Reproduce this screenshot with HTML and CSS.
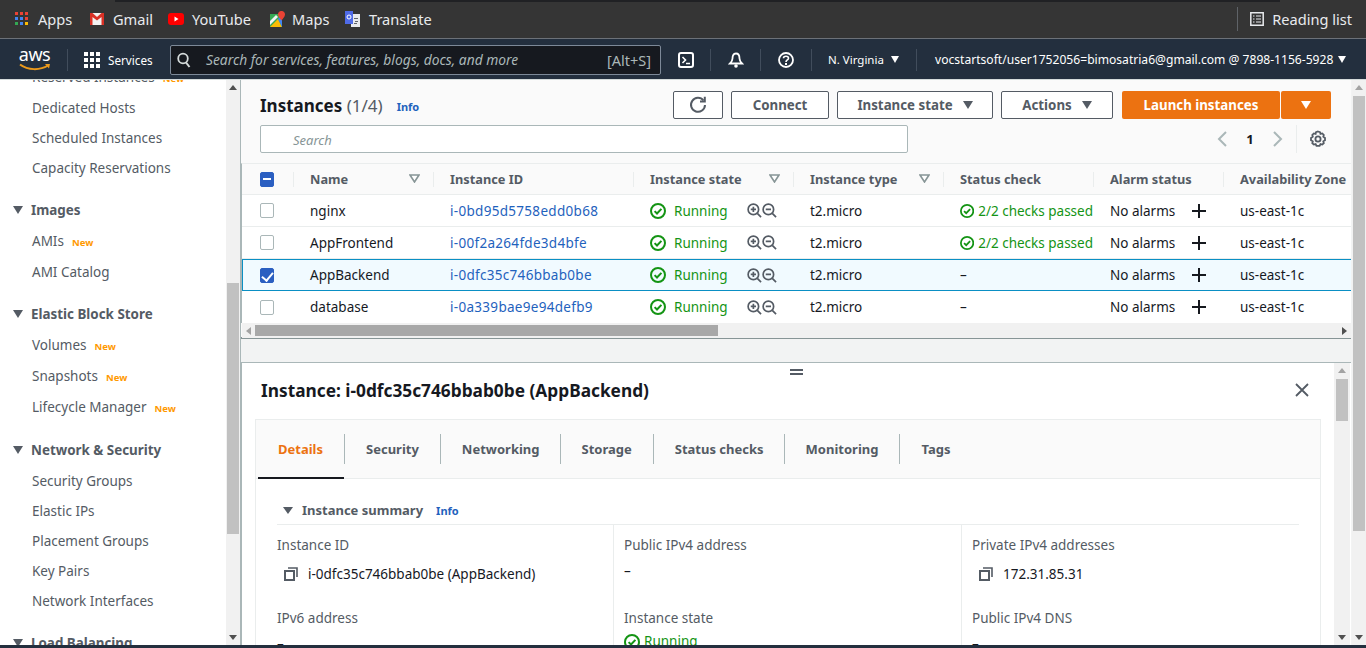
FILE: index.html
```html
<!DOCTYPE html>
<html>
<head>
  <meta charset="utf-8">
  <title>Instances | EC2 Management Console</title>
  <link rel="stylesheet" href="styles.css">
</head>
<body>
  <!-- shared icons -->
  <svg class="defs" width="0" height="0">
    <symbol id="i-check" viewBox="0 0 16 16">
      <circle cx="8" cy="8" r="7" fill="none" stroke="currentColor" stroke-width="2"/>
      <path d="M4.6 8.1l2.4 2.4 4.4-4.6" fill="none" stroke="currentColor" stroke-width="2"/>
    </symbol>
    <symbol id="i-zoomin" viewBox="0 0 16 16">
      <circle cx="6.8" cy="6.8" r="5.6" fill="none" stroke="currentColor" stroke-width="1.8"/>
      <path d="M11 11l4 4M4 6.8h5.6M6.8 4v5.6" fill="none" stroke="currentColor" stroke-width="1.8"/>
    </symbol>
    <symbol id="i-zoomout" viewBox="0 0 16 16">
      <circle cx="6.8" cy="6.8" r="5.6" fill="none" stroke="currentColor" stroke-width="1.8"/>
      <path d="M11 11l4 4M4 6.8h5.6" fill="none" stroke="currentColor" stroke-width="1.8"/>
    </symbol>
    <symbol id="i-plus" viewBox="0 0 14 14">
      <path d="M7 0v14M0 7h14" fill="none" stroke="currentColor" stroke-width="2"/>
    </symbol>
    <symbol id="i-copy" viewBox="0 0 14 14">
      <path d="M1 4h9v9H1z" fill="none" stroke="currentColor" stroke-width="2"/>
      <path d="M4 1h9v9" fill="none" stroke="currentColor" stroke-width="1.6"/>
    </symbol>
    <symbol id="i-filter" viewBox="0 0 11 9">
      <path d="M1 1h9L5.5 8z" fill="#fff" stroke="currentColor" stroke-width="1.6"/>
    </symbol>
  </svg>

  <!-- browser bookmarks bar -->
  <div class="bookmarks">
    <div class="window-edge"></div>
    <div class="bookmarks-row">
      <a class="mark mark-apps">
        <svg width="14" height="14" viewBox="0 0 14 14">
          <path fill="#ea4335" d="M0 0h3v3H0zM5 0h3v3H5z"/><path fill="#ea4335" d="M10 0h3v3h-3z"/>
          <path fill="#4285f4" d="M0 5h3v3H0zM5 5h3v3H5z"/><path fill="#ea4335" d="M10 5h3v3h-3z"/>
          <path fill="#34a853" d="M0 10h3v3H0z"/><path fill="#4285f4" d="M5 10h3v3H5z"/><path fill="#fbbc05" d="M10 10h3v3h-3z"/>
        </svg>
        Apps
      </a>
      <a class="mark mark-gmail">
        <svg width="14" height="12" viewBox="0 0 14 12">
          <path fill="#f2f2f2" d="M0 0h14v12H0z"/>
          <path fill="#d93025" d="M0 0h2.5L7 4l4.500-4H14v12h-2.500V4L7 7.500 2.500 4v8H0z"/>
        </svg>
        Gmail
      </a>
      <a class="mark mark-yt">
        <svg width="16" height="12" viewBox="0 0 16 12">
          <rect width="16" height="12" rx="3" fill="#f00"/>
          <path fill="#fff" d="M6.500 3.500l4 2.500-4 2.500z"/>
        </svg>
        YouTube
      </a>
      <a class="mark mark-maps">
        <svg width="15" height="16" viewBox="0 0 15 16">
          <path fill="#34a853" d="M0 3h12v13H0z"/>
          <path fill="#fbbc05" d="M0 16L8 8l4 8z"/>
          <path fill="#4285f4" d="M8 8l4-4v12z"/>
          <path fill="#f1f3f4" d="M0 10l6-6 2 2-8 8z"/>
          <path fill="#ea4335" d="M11.500 0A3.300 3.300 0 0 1 15 3.400C15 5.800 12.500 7.500 11.500 9.500 10.500 7.500 8 5.800 8 3.400A3.300 3.300 0 0 1 11.500 0z"/>
        </svg>
        Maps
      </a>
      <a class="mark mark-translate">
        <svg width="15" height="16" viewBox="0 0 15 16">
          <path fill="#e8eaed" d="M6 3h9v13H6z"/>
          <path fill="#5f6368" d="M9 7h4v1H9zM10 10h3v1h-3zM9 12h3v1H9z"/>
          <path fill="#4f6be8" d="M0 0h8v13H0z"/>
          <circle cx="4" cy="6" r="2" fill="none" stroke="#fff" stroke-width="1"/>
        </svg>
        Translate
      </a>
      <div class="reading">
        <svg width="14" height="14" viewBox="0 0 14 14">
          <path fill="none" stroke="#e8eaed" stroke-width="1.500" d="M.8.800h12.400v12.400H.8z"/>
          <path stroke="#e8eaed" stroke-width="1.200" d="M3 4h1.500M6 4h5M3 7h1.500M6 7h5M3 10h1.500M6 10h5"/>
        </svg>
        Reading list
      </div>
    </div>
  </div>

  <!-- console top nav -->
  <nav class="topnav">
    <div class="aws-logo">
      <span class="aws-word">aws</span>
      <svg width="32" height="9" viewBox="0 0 32 9">
        <path d="M1 1.500c8 6 20 6 28 1" fill="none" stroke="#ec9a1c" stroke-width="2"/>
        <path d="M26 1h5l-1 4.500z" fill="#ec9a1c"/>
      </svg>
    </div>
    <span class="nav-sep sep-logo"></span>
    <svg class="services-icon" width="16" height="16" viewBox="0 0 16 16" fill="#fff">
      <path d="M0 0h4v4H0zM6 0h4v4H6zM12 0h4v4h-4zM0 6h4v4H0zM6 6h4v4H6zM12 6h4v4h-4zM0 12h4v4H0zM6 12h4v4H6zM12 12h4v4h-4z"/>
    </svg>
    <span class="services">Services</span>
    <div class="nav-search">
      <svg width="14" height="16" viewBox="0 0 14 16">
        <circle cx="6" cy="6.500" r="4.800" fill="none" stroke="#d5dbdb" stroke-width="1.800"/>
        <path d="M9 10.500l3.500 4.500" stroke="#d5dbdb" stroke-width="2"/>
      </svg>
      <span class="nav-placeholder">Search for services, features, blogs, docs, and more</span>
      <span class="nav-shortcut">[Alt+S]</span>
    </div>
    <svg class="nav-icon shell-icon" width="16" height="16" viewBox="0 0 16 16">
      <rect x="1" y="1" width="14" height="14" rx="2" fill="none" stroke="#fff" stroke-width="2"/>
      <path d="M4.500 5l3 3-3 3M8 11.500h4" fill="none" stroke="#fff" stroke-width="1.600"/>
    </svg>
    <span class="nav-sep sep-shell"></span>
    <svg class="nav-icon bell-icon" width="16" height="16" viewBox="0 0 16 16">
      <path d="M8 1.500c3 0 3.500 3 3.500 5 0 2 1 3.500 2.500 5H2c1.500-1.500 2.500-3 2.500-5 0-2 .5-5 3.500-5z" fill="none" stroke="#fff" stroke-width="1.800"/>
      <circle cx="8" cy="14" r="1.800" fill="#fff"/>
    </svg>
    <span class="nav-sep sep-bell"></span>
    <svg class="nav-icon help-icon" width="16" height="16" viewBox="0 0 16 16">
      <circle cx="8" cy="8" r="7" fill="none" stroke="#fff" stroke-width="1.800"/>
      <path d="M5.500 6.200C5.500 3.500 10.500 3.500 10.500 6.200 10.500 8 8 8 8 10" fill="none" stroke="#fff" stroke-width="1.600"/>
      <path d="M7 11h2v2H7z" fill="#fff"/>
    </svg>
    <span class="nav-sep sep-help"></span>
    <span class="nav-text region">N. Virginia</span>
    <span class="caret-white caret-region"></span>
    <span class="nav-sep sep-region"></span>
    <span class="nav-text account">vocstartsoft/user1752056=bimosatria6@gmail.com @ 7898-1156-5928</span>
    <span class="caret-white caret-account"></span>
  </nav>

  <div class="page">
    <!-- left side navigation, scrolled part way down -->
    <aside class="sidenav">
      <div class="sidenav-list">
        <a class="nav-link with-new">Reserved Instances <em>New</em></a>
        <a class="nav-link">Dedicated Hosts</a>
        <a class="nav-link">Scheduled Instances</a>
        <a class="nav-link">Capacity Reservations</a>

        <h3 class="nav-group"><i></i>Images</h3>
        <a class="nav-link with-new">AMIs <em>New</em></a>
        <a class="nav-link">AMI Catalog</a>

        <h3 class="nav-group"><i></i>Elastic Block Store</h3>
        <a class="nav-link with-new">Volumes <em>New</em></a>
        <a class="nav-link with-new">Snapshots <em>New</em></a>
        <a class="nav-link with-new">Lifecycle Manager <em>New</em></a>

        <h3 class="nav-group"><i></i>Network &amp; Security</h3>
        <a class="nav-link">Security Groups</a>
        <a class="nav-link">Elastic IPs</a>
        <a class="nav-link">Placement Groups</a>
        <a class="nav-link">Key Pairs</a>
        <a class="nav-link">Network Interfaces</a>

        <h3 class="nav-group"><i></i>Load Balancing</h3>
      </div>
      <div class="vscroll side-scroll">
        <span class="arrow-up"></span>
        <span class="thumb"></span>
        <span class="arrow-down"></span>
      </div>
    </aside>

    <main class="content">
      <!-- instances list -->
      <section class="list-panel">
        <div class="list-head">
          <h1>Instances <span class="count">(1/4)</span></h1>
          <a class="info info-head">Info</a>
          <div class="actions">
            <button class="btn btn-refresh">
              <svg width="18" height="18" viewBox="0 0 18 18">
                <path d="M14.500 4.500A7 7 0 1 0 16 9" fill="none" stroke="#545b64" stroke-width="2"/>
                <path d="M11 5.500h4.800V.7" fill="none" stroke="#545b64" stroke-width="2"/>
              </svg>
            </button>
            <button class="btn btn-connect">Connect</button>
            <button class="btn btn-state">Instance state <span class="caret"></span></button>
            <button class="btn btn-actions">Actions <span class="caret"></span></button>
            <button class="btn-primary btn-launch">Launch instances</button>
            <button class="btn-primary btn-more"><span class="caret caret-on-orange"></span></button>
          </div>
        </div>

        <div class="filter-row">
          <div class="search-box">Search</div>
          <div class="pager">
            <svg width="10" height="16" viewBox="0 0 10 16"><path d="M9 1L2 8l7 7" fill="none" stroke="#aab7b8" stroke-width="2"/></svg>
            <b>1</b>
            <svg width="10" height="16" viewBox="0 0 10 16"><path d="M1 1l7 7-7 7" fill="none" stroke="#aab7b8" stroke-width="2"/></svg>
          </div>
          <div class="prefs">
            <svg width="18" height="18" viewBox="0 0 18 18">
              <path d="M9 1.500l2 .6.500 1.800 1.800-.5 1.500 1.500-.5 1.800 1.700 1.300v2.200l-1.700 1.100.5 1.900-1.500 1.400-1.800-.5-.9 1.800H7.500l-.9-1.800-1.800.5-1.500-1.400.5-1.900L2 10.200V8l1.800-1.300-.5-1.800 1.500-1.500 1.800.5.400-1.800z" fill="none" stroke="#545b64" stroke-width="1.800"/>
              <circle cx="9" cy="9" r="2.600" fill="none" stroke="#545b64" stroke-width="1.800"/>
            </svg>
          </div>
        </div>

        <div class="table-wrap">
          <table class="instances">
            <colgroup>
              <col class="c-check"><col class="c-name"><col class="c-id"><col class="c-state">
              <col class="c-type"><col class="c-status"><col class="c-alarm"><col class="c-az">
            </colgroup>
            <thead>
              <tr>
                <th><span class="cb cb-mixed"></span></th>
                <th><div class="th-in">Name <svg class="filter" width="11" height="9"><use href="#i-filter"/></svg></div></th>
                <th><div class="th-in">Instance ID</div></th>
                <th><div class="th-in">Instance state <svg class="filter" width="11" height="9"><use href="#i-filter"/></svg></div></th>
                <th><div class="th-in">Instance type <svg class="filter" width="11" height="9"><use href="#i-filter"/></svg></div></th>
                <th><div class="th-in">Status check</div></th>
                <th><div class="th-in">Alarm status</div></th>
                <th><div class="th-in">Availability Zone</div></th>
              </tr>
            </thead>
            <tbody>
              <tr>
                <td><span class="cb"></span></td>
                <td>nginx</td>
                <td><a class="link">i-0bd95d5758edd0b68</a></td>
                <td><div class="state"><svg width="16" height="16"><use href="#i-check"/></svg><span>Running</span><span class="zooms"><svg width="15" height="15"><use href="#i-zoomin"/></svg><svg width="15" height="15"><use href="#i-zoomout"/></svg></span></div></td>
                <td>t2.micro</td>
                <td><div class="passed"><svg width="16" height="16"><use href="#i-check"/></svg><span>2/2 checks passed</span></div></td>
                <td><div class="alarm">No alarms <svg width="14" height="14"><use href="#i-plus"/></svg></div></td>
                <td>us-east-1c</td>
              </tr>
              <tr>
                <td><span class="cb"></span></td>
                <td>AppFrontend</td>
                <td><a class="link">i-00f2a264fde3d4bfe</a></td>
                <td><div class="state"><svg width="16" height="16"><use href="#i-check"/></svg><span>Running</span><span class="zooms"><svg width="15" height="15"><use href="#i-zoomin"/></svg><svg width="15" height="15"><use href="#i-zoomout"/></svg></span></div></td>
                <td>t2.micro</td>
                <td><div class="passed"><svg width="16" height="16"><use href="#i-check"/></svg><span>2/2 checks passed</span></div></td>
                <td><div class="alarm">No alarms <svg width="14" height="14"><use href="#i-plus"/></svg></div></td>
                <td>us-east-1c</td>
              </tr>
              <tr class="selected">
                <td><span class="cb cb-on"></span></td>
                <td>AppBackend</td>
                <td><a class="link">i-0dfc35c746bbab0be</a></td>
                <td><div class="state"><svg width="16" height="16"><use href="#i-check"/></svg><span>Running</span><span class="zooms"><svg width="15" height="15"><use href="#i-zoomin"/></svg><svg width="15" height="15"><use href="#i-zoomout"/></svg></span></div></td>
                <td>t2.micro</td>
                <td>–</td>
                <td><div class="alarm">No alarms <svg width="14" height="14"><use href="#i-plus"/></svg></div></td>
                <td>us-east-1c</td>
              </tr>
              <tr>
                <td><span class="cb"></span></td>
                <td>database</td>
                <td><a class="link">i-0a339bae9e94defb9</a></td>
                <td><div class="state"><svg width="16" height="16"><use href="#i-check"/></svg><span>Running</span><span class="zooms"><svg width="15" height="15"><use href="#i-zoomin"/></svg><svg width="15" height="15"><use href="#i-zoomout"/></svg></span></div></td>
                <td>t2.micro</td>
                <td>–</td>
                <td><div class="alarm">No alarms <svg width="14" height="14"><use href="#i-plus"/></svg></div></td>
                <td>us-east-1c</td>
              </tr>
            </tbody>
          </table>
        </div>

        <div class="hscroll">
          <span class="arrow-left"></span>
          <span class="hthumb"></span>
          <span class="arrow-right"></span>
        </div>
      </section>

      <div class="split-gap"></div>

      <!-- details of selected instance -->
      <section class="detail-panel">
        <span class="drag-handle"></span>
        <div class="detail-body">
          <div class="detail-head">
            <h2>Instance: i-0dfc35c746bbab0be (AppBackend)</h2>
            <svg width="14" height="14" viewBox="0 0 14 14"><path d="M1 1l12 12M13 1L1 13" stroke="#545b64" stroke-width="1.800"/></svg>
          </div>
          <div class="card">
            <div class="tabs">
              <a class="tab tab-active">Details</a>
              <a class="tab">Security</a>
              <a class="tab tab-tight">Networking</a>
              <a class="tab">Storage</a>
              <a class="tab tab-tight">Status checks</a>
              <a class="tab">Monitoring</a>
              <a class="tab tab-last">Tags</a>
            </div>
            <div class="summary">
              <div class="summary-head">
                <span class="summary-caret"></span>
                <strong>Instance summary</strong>
                <a class="info">Info</a>
              </div>
              <div class="summary-grid">
                <div class="col">
                  <div class="label">Instance ID</div>
                  <div class="value"><svg width="14" height="14"><use href="#i-copy"/></svg>i-0dfc35c746bbab0be (AppBackend)</div>
                  <div class="label">IPv6 address</div>
                  <div class="value plain">–</div>
                </div>
                <div class="col">
                  <div class="label">Public IPv4 address</div>
                  <div class="value plain">–</div>
                  <div class="label">Instance state</div>
                  <div class="value plain passed"><svg width="16" height="16"><use href="#i-check"/></svg><span>Running</span></div>
                </div>
                <div class="col">
                  <div class="label">Private IPv4 addresses</div>
                  <div class="value"><svg width="14" height="14"><use href="#i-copy"/></svg>172.31.85.31</div>
                  <div class="label">Public IPv4 DNS</div>
                  <div class="value plain">–</div>
                </div>
              </div>
            </div>
          </div>
        </div>
        <div class="vscroll detail-scroll">
          <span class="arrow-up"></span>
          <span class="thumb"></span>
          <span class="arrow-down"></span>
        </div>
      </section>
    </main>

    <div class="vscroll page-scroll">
      <span class="arrow-up"></span>
      <span class="thumb"></span>
      <span class="arrow-down"></span>
    </div>
  </div>

  <div class="footer-strip"></div>
</body>
</html>
```

FILE: styles.css
```css
* {
  box-sizing: border-box;
}
html, body {
  margin: 0;
  height: 100%;
}
body {
  width: 1366px;
  height: 648px;
  overflow: hidden;
  display: flex;
  flex-direction: column;
  font-family: "Noto Sans", "Open Sans", sans-serif;
  font-size: 13.5px;
  color: #16191f;
  background: #f2f3f3;
}
.defs {
  position: absolute;
}
h1, h2, h3 {
  margin: 0;
}

/* bookmarks bar */
.bookmarks {
  height: 38px;
  background: #353535;
  flex: none;
}
.window-edge {
  height: 2px;
  margin: 0 86px 0 115px;
  background: #202124;
}
.bookmarks-row {
  height: 36px;
  display: flex;
  align-items: center;
  color: #e8eaed;
  font-size: 14.600px;
  padding-bottom: 3px;
}
.mark {
  display: flex;
  align-items: center;
  gap: 9px;
  white-space: nowrap;
}
.mark-apps { margin-left: 15px; width: 75px; }
.mark-gmail { width: 78px; }
.mark-yt { width: 102px; gap: 8px; }
.mark-maps { width: 75px; gap: 7px; }
.mark-translate { gap: 9px; }
.reading {
  margin-left: auto;
  padding: 2px 14px 2px 12px;
  display: flex;
  align-items: center;
  gap: 8px;
  border-left: 1px solid #5f6368;
  white-space: nowrap;
}

/* console nav */
.topnav {
  height: 42px;
  flex: none;
  display: flex;
  align-items: center;
  padding-top: 1px;
  background: #232f3e;
  border-top: 1px solid #6c7178;
  border-bottom: 1px solid #d5dbdb;
  color: #fff;
}
.aws-logo {
  width: 33px;
  margin-left: 18px;
  display: flex;
  flex-direction: column;
  align-items: center;
  line-height: 14px;
}
.aws-word {
  font-size: 18px;
  font-weight: 400;
  letter-spacing: -.5px;
  height: 15px;
}
.aws-logo svg {
  margin-top: 1px;
}
.nav-sep {
  width: 1px;
  height: 22px;
  background: #414d5c;
  flex: none;
}
.sep-logo { margin-left: 16px; }
.services-icon { margin-left: 16px; }
.services {
  margin-left: 8px;
  font-size: 11.700px;
  width: 62px;
}
.nav-search {
  width: 491px;
  height: 30px;
  display: flex;
  align-items: center;
  padding: 0 9px 0 6px;
  background: #16191f;
  border: 1px solid #7d8998;
  border-radius: 2px;
  color: #aab7b8;
}
.nav-placeholder {
  margin-left: 15px;
  font-style: italic;
  font-size: 13.800px;
  white-space: nowrap;
}
.nav-shortcut {
  margin-left: auto;
  font-size: 14.500px;
}
.shell-icon { margin-left: 17px; }
.sep-shell { margin-left: 16px; }
.bell-icon { margin-left: 17px; }
.sep-bell { margin-left: 16px; }
.help-icon { margin-left: 17px; }
.sep-help { margin-left: 17px; }
.nav-text {
  font-size: 11.500px;
  white-space: nowrap;
}
.region { margin-left: 16px; width: 58px; }
.account {
  margin-left: 18px;
  width: 398px;
  font-size: 12.100px;
}
.caret-white {
  width: 0;
  height: 0;
  border-left: 4.500px solid transparent;
  border-right: 4.500px solid transparent;
  border-top: 7px solid #fff;
  flex: none;
}
.caret-region { margin-left: 5px; }
.sep-region { margin-left: 17px; }
.caret-account { margin-left: 5px; }

/* page */
.page {
  flex: 1;
  min-height: 0;
  display: flex;
}

/* side nav */
.sidenav {
  width: 241px;
  flex: none;
  display: flex;
  background: #fff;
  border-right: 1px solid #aab7b8;
  overflow: hidden;
}
.sidenav-list {
  width: 226px;
  flex: none;
  margin-top: -18px;
  color: #545b64;
}
.nav-link {
  display: flex;
  align-items: center;
  gap: 7px;
  height: 30px;
  padding-left: 32px;
  white-space: nowrap;
}
.nav-link em {
  font-style: normal;
  font-weight: 700;
  font-size: 9.500px;
  color: #ff9900;
  margin-left: 1px;
  padding-top: 3px;
}
.with-new {
  height: 31px;
  padding-bottom: 1px;
}
.nav-group {
  display: flex;
  align-items: center;
  height: 32px;
  margin-top: 11px;
  padding-left: 13px;
  font-size: 13.400px;
  font-weight: 700;
  white-space: nowrap;
}
.nav-group i {
  width: 0;
  height: 0;
  border-left: 5.500px solid transparent;
  border-right: 5.500px solid transparent;
  border-top: 8px solid #545b64;
  margin-right: 8px;
}

/* fake scrollbars */
.vscroll {
  width: 14px;
  flex: none;
  display: flex;
  flex-direction: column;
  align-items: center;
  background: #f1f1f1;
  position: relative;
}
.arrow-up, .arrow-down {
  position: absolute;
  width: 0;
  height: 0;
  border-left: 4px solid transparent;
  border-right: 4px solid transparent;
}
.arrow-up {
  top: 5px;
  border-bottom: 5px solid #505050;
}
.arrow-down {
  bottom: 5px;
  border-top: 5px solid #505050;
}
.thumb {
  width: 12px;
  background: #c1c1c1;
}
.side-scroll .thumb {
  margin-top: 203px;
  height: 251px;
}
.page-scroll {
  margin-left: 1px;
}
.page-scroll .thumb {
  margin-top: 16px;
  height: 435px;
}
.page-scroll .arrow-up {
  border-bottom-color: #a3a3a3;
}
.detail-scroll {
  width: 16px;
  margin-left: auto;
  margin-right: 1px;
}
.detail-scroll .thumb {
  margin-top: 16px;
  height: 42px;
}
.detail-scroll .arrow-up {
  border-bottom-color: #a3a3a3;
}

/* main */
.content {
  width: 1110px;
  flex: none;
  display: flex;
  flex-direction: column;
  min-height: 0;
}
.list-panel {
  height: 259px;
  flex: none;
  background: #fafafa;
  border-bottom: 2px solid #879596;
}
.list-head {
  height: 45px;
  display: flex;
  align-items: center;
  padding: 10px 20px 5px 19px;
}
.list-head h1 {
  font-size: 17px;
  font-weight: 700;
  white-space: nowrap;
}
.count {
  font-weight: 400;
  color: #545b64;
}
.info {
  color: #1f62bd;
  font-size: 11px;
  font-weight: 700;
}
.info-head {
  margin-left: 14px;
  padding-top: 3px;
}
.actions {
  margin-left: auto;
  display: flex;
  align-items: center;
}
.btn, .btn-primary {
  height: 28px;
  padding: 0;
  display: flex;
  align-items: center;
  justify-content: center;
  font: 700 13.300px "Noto Sans", sans-serif;
  border-radius: 2px;
  white-space: nowrap;
}
.btn {
  background: #fff;
  color: #545b64;
  border: 1px solid #545b64;
  margin-right: 8px;
}
.btn-refresh { width: 50px; }
.btn-connect { width: 98px; }
.btn-state { width: 156px; gap: 10px; }
.btn-actions { width: 112px; gap: 10px; margin-right: 9px; }
.btn-primary {
  background: #ec7211;
  color: #fff;
  border: 0;
}
.btn-launch { width: 158px; }
.btn-more { width: 50px; margin-left: 1px; }
.caret {
  width: 0;
  height: 0;
  border-left: 5.500px solid transparent;
  border-right: 5.500px solid transparent;
  border-top: 8px solid #545b64;
}
.caret-on-orange {
  border-top-color: #fff;
}
.filter-row {
  height: 38px;
  display: flex;
  align-items: flex-start;
  padding: 0 24px 0 19px;
}
.search-box {
  width: 648px;
  height: 28px;
  line-height: 28px;
  padding-left: 32px;
  background: #fff;
  border: 1px solid #aab7b8;
  border-radius: 2px;
  color: #879596;
  font-size: 13px;
  font-style: italic;
}
.pager {
  margin-left: auto;
  height: 28px;
  display: flex;
  align-items: center;
  gap: 18px;
}
.pager b {
  font-size: 13px;
  width: 10px;
  text-align: center;
}
.prefs {
  height: 28px;
  margin-left: 13px;
  padding-left: 12px;
  border-left: 1px solid #eaeded;
  display: flex;
  align-items: center;
}

/* table */
.table-wrap {
  overflow: hidden;
  border-top: 1px solid #eaeded;
  border-left: 1px solid #aab7b8;
}
.instances {
  table-layout: fixed;
  width: 1250px;
  border-collapse: separate;
  border-spacing: 0;
  background: #fff;
}
.c-check { width: 51px; }
.c-name { width: 140px; }
.c-id { width: 200px; }
.c-state { width: 160px; }
.c-type { width: 150px; }
.c-status { width: 150px; }
.c-alarm { width: 130px; }
.c-az { width: 269px; }
.instances th {
  height: 31px;
  padding: 0;
  text-align: left;
  background: #fafafa;
  color: #545b64;
  font-size: 12.800px;
  font-weight: 700;
  border-bottom: 1px solid #eaeded;
  white-space: nowrap;
}
.instances td {
  height: 32px;
  padding: 0 0 0 17px;
  border-bottom: 1px solid #eaeded;
  white-space: nowrap;
  overflow: hidden;
}
.instances th:first-child, .instances td:first-child {
  padding: 0 0 0 18px;
}
.instances tbody tr:last-child td {
  border-bottom: 0;
}
.th-in {
  height: 15px;
  line-height: 15px;
  display: flex;
  align-items: center;
  padding: 0 13px 0 16px;
  border-left: 1px solid #eaeded;
  justify-content: space-between;
}
.filter {
  color: #879596;
  margin-top: -1px;
}
.cb {
  display: block;
  width: 14px;
  height: 15px;
  background: #fff;
  border: 1px solid #aab7b8;
  border-radius: 2px;
  position: relative;
}
.cb-mixed, .cb-on {
  background: #2b5fc1;
  border-color: #2b5fc1;
}
.cb-mixed::after {
  content: "";
  position: absolute;
  left: 2px;
  right: 2px;
  top: 5px;
  height: 2px;
  background: #fff;
}
.cb-on::after {
  content: "";
  position: absolute;
  left: 3px;
  top: 1px;
  width: 5px;
  height: 9px;
  border: solid #fff;
  border-width: 0 2px 2px 0;
  transform: rotate(40deg);
}
.selected td {
  background: #f1faff;
  border-top: 1px solid #0a8fc4;
  border-bottom: 1px solid #0a8fc4;
}
.instances .selected td:first-child {
  border-left: 1px solid #0a8fc4;
  padding-left: 17px;
}
.link {
  color: #1f62bd;
  letter-spacing: .3px;
}
.state, .passed {
  display: flex;
  align-items: center;
  color: #149414;
}
.state span:first-of-type {
  margin-left: 8px;
}
.passed span {
  margin-left: 4px;
}
.zooms {
  display: flex;
  margin-left: 19px;
  color: #545b64;
}
.alarm {
  display: flex;
  align-items: center;
  justify-content: space-between;
  padding-right: 17px;
}
.hscroll {
  height: 15px;
  margin-left: 1px;
  background: #f1f1f1;
  display: flex;
  align-items: center;
  padding: 0 4px;
}
.arrow-left, .arrow-right {
  width: 0;
  height: 0;
  border-top: 4px solid transparent;
  border-bottom: 4px solid transparent;
}
.arrow-left {
  border-right: 5px solid #a3a3a3;
}
.arrow-right {
  border-left: 5px solid #505050;
  margin-left: auto;
}
.hthumb {
  width: 463px;
  height: 11px;
  margin-left: 4px;
  background: #a8a8a8;
}
.split-gap {
  height: 23px;
  flex: none;
}

/* detail */
.detail-panel {
  flex: 1;
  min-height: 0;
  display: flex;
  background: #fff;
  border-top: 1px solid #aab7b8;
  border-left: 1px solid #aab7b8;
  position: relative;
  overflow: hidden;
}
.drag-handle {
  position: absolute;
  left: 548px;
  top: 6px;
  width: 13px;
  height: 6px;
  border-top: 2px solid #545b64;
  border-bottom: 2px solid #545b64;
}
.detail-body {
  width: 1092px;
  flex: none;
  padding: 0 13px 0 13px;
}
.detail-head {
  height: 56px;
  display: flex;
  align-items: center;
  justify-content: space-between;
  padding: 0 12px 2px 6px;
}
.detail-head h2 {
  font-size: 17.300px;
  font-weight: 700;
  white-space: nowrap;
}
.card {
  border: 1px solid #eaeded;
}
.tabs {
  height: 59px;
  display: flex;
  align-items: center;
  background: #fafafa;
  border-bottom: 1px solid #eaeded;
  padding-left: 1px;
}
.tab {
  height: 30px;
  display: flex;
  align-items: center;
  padding: 0 21px;
  border-right: 1px solid #aab7b8;
  color: #545b64;
  font-size: 13px;
  font-weight: 700;
  white-space: nowrap;
}
.tab-tight {
  padding-right: 20px;
}
.tab-last {
  border-right: 0;
}
.tab-active {
  color: #ec7211;
  position: relative;
}
.tab-active::after {
  content: "";
  position: absolute;
  left: 1px;
  right: 0;
  top: 43px;
  height: 2px;
  background: #16191f;
}
.summary {
  padding: 0 21px;
}
.summary-head {
  height: 46px;
  display: flex;
  align-items: center;
  padding: 17px 0 0 6px;
  border-bottom: 1px solid #eaeded;
  color: #545b64;
  font-size: 13px;
}
.summary-caret {
  width: 0;
  height: 0;
  border-left: 5px solid transparent;
  border-right: 5px solid transparent;
  border-top: 7px solid #545b64;
  margin-right: 9px;
}
.summary-head strong {
  font-weight: 700;
}
.summary-head .info {
  margin-left: 13px;
}
.summary-grid {
  display: grid;
  grid-template-columns: 336px 348px 1fr;
}
.col {
  padding: 11px 0 0 10px;
  border-left: 1px solid #eaeded;
}
.col:first-child {
  padding-left: 0;
  border-left: 0;
}
.label {
  height: 18px;
  line-height: 18px;
  color: #545b64;
}
.value {
  height: 55px;
  display: flex;
  align-items: flex-start;
  gap: 10px;
  padding: 11px 0 0 7px;
  line-height: 18px;
  white-space: nowrap;
}
.value svg {
  color: #545b64;
  margin-top: 2px;
}
.value.plain {
  padding-left: 0;
  padding-top: 8px;
  gap: 4px;
}
.value.passed {
  padding-top: 5px;
}
.value.passed svg {
  color: #149414;
}
.value.passed span {
  margin-left: 0;
}
.footer-strip {
  height: 3px;
  flex: none;
  background: #232f3e;
}
```
